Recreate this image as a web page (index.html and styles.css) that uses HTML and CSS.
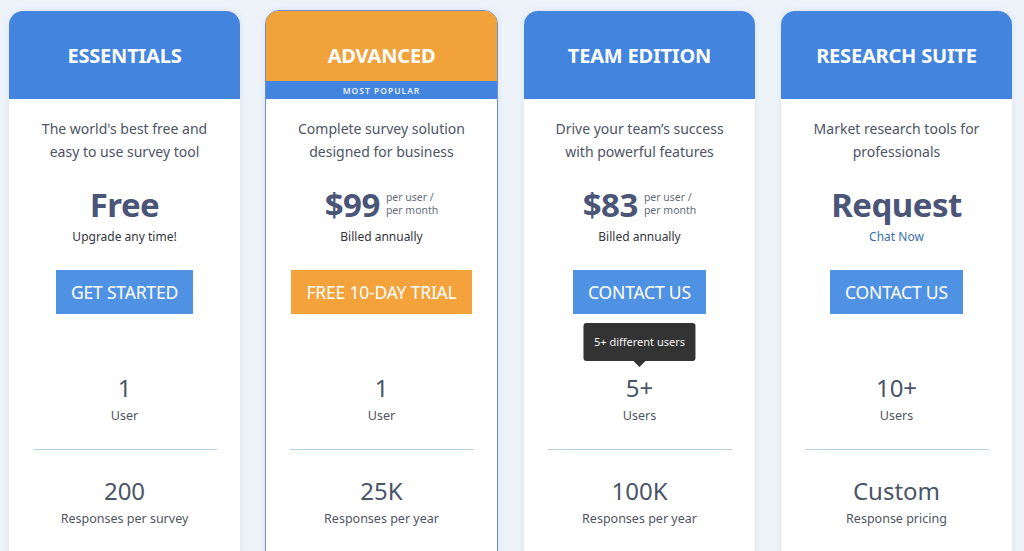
FILE: index.html
```html
<!DOCTYPE html>
<html>
<head>
<meta charset="utf-8">
<link rel="stylesheet" href="styles.css">
</head>
<body>
<div class="plans">
  <div class="card">
    <div class="head blue"><h2>ESSENTIALS</h2></div>
    <div class="body">
      <p class="desc">The world's best free and<br>easy to use survey tool</p>
      <div class="price"><span class="amount">Free</span></div>
      <p class="note">Upgrade any time!</p>
      <a class="btn btn-blue">GET STARTED</a>
      <div class="stat"><span class="num">1</span><span class="label">User</span></div>
      <hr class="divider">
      <div class="stat"><span class="num">200</span><span class="label">Responses per survey</span></div>
    </div>
  </div>
  <div class="card popular">
    <div class="head orange"><h2>ADVANCED</h2></div>
    <div class="band">MOST POPULAR</div>
    <div class="body">
      <p class="desc">Complete survey solution<br>designed for business</p>
      <div class="price"><span class="amount">$99</span><span class="per">per user /<br>per month</span></div>
      <p class="note">Billed annually</p>
      <a class="btn btn-orange">FREE 10-DAY TRIAL</a>
      <div class="stat"><span class="num">1</span><span class="label">User</span></div>
      <hr class="divider">
      <div class="stat"><span class="num">25K</span><span class="label">Responses per year</span></div>
    </div>
  </div>
  <div class="card">
    <div class="head blue"><h2>TEAM EDITION</h2></div>
    <div class="body">
      <p class="desc">Drive your team’s success<br>with powerful features</p>
      <div class="price"><span class="amount">$83</span><span class="per">per user /<br>per month</span></div>
      <p class="note">Billed annually</p>
      <a class="btn btn-blue">CONTACT US</a>
      <div class="stat"><div class="tooltip">5+ different users</div><span class="num">5+</span><span class="label">Users</span></div>
      <hr class="divider">
      <div class="stat"><span class="num">100K</span><span class="label">Responses per year</span></div>
    </div>
  </div>
  <div class="card">
    <div class="head blue"><h2>RESEARCH SUITE</h2></div>
    <div class="body">
      <p class="desc">Market research tools for<br>professionals</p>
      <div class="price"><span class="amount">Request</span></div>
      <p class="note link">Chat Now</p>
      <a class="btn btn-blue">CONTACT US</a>
      <div class="stat"><span class="num">10+</span><span class="label">Users</span></div>
      <hr class="divider">
      <div class="stat"><span class="num">Custom</span><span class="label">Response pricing</span></div>
    </div>
  </div>
</div>
</body>
</html>
```
FILE: styles.css
```css
* { box-sizing: border-box; }
html, body { margin: 0; height: 100%; overflow: hidden; }
body {
  background: #eef3fa;
  font-family: "Noto Sans", "Open Sans", sans-serif;
  color: #4a5160;
}
.plans {
  display: flex;
  gap: 26px;
  padding: 11px 12px 0 9px;
}
.card {
  width: 231px;
  flex: none;
  background: #fff;
  border-radius: 14px 14px 0 0;
  height: 560px;
  box-shadow: 0 0 6px rgba(120, 150, 190, 0.18);
  display: flex;
  flex-direction: column;
}
.card.popular {
  width: 233px;
  border: 1.5px solid #6b8fcb;
  margin-top: -1px;
  margin-left: -1px;
}
.head {
  height: 88px;
  display: flex;
  align-items: center;
  justify-content: center;
  border-radius: 14px 14px 0 0;
}
.popular .head {
  height: 70px;
  padding-top: 18px;
  border-radius: 12px 12px 0 0;
}
.head h2 {
  margin: 0;
  color: #fff;
  font-size: 20px;
  font-weight: 700;
  letter-spacing: -0.2px;
}
.blue { background: #4284de; }
.orange { background: #f1a23a; }
.band {
  height: 18px;
  background: #4284de;
  color: #e8f0fb;
  font-size: 8.5px;
  font-weight: 600;
  letter-spacing: 1px;
  display: flex;
  align-items: center;
  justify-content: center;
}
.body {
  display: flex;
  flex-direction: column;
  align-items: center;
  padding: 18px 22px 0;
  text-align: center;
}
.desc {
  margin: 0;
  font-size: 14px;
  line-height: 23px;
  color: #4d5466;
}
.price {
  margin-top: 22px;
  height: 40px;
  display: flex;
  align-items: center;
  justify-content: center;
  gap: 6px;
}
.amount {
  font-size: 33px;
  font-weight: 700;
  color: #4a5578;
  letter-spacing: -0.5px;
  line-height: 40px;
}
.per {
  font-size: 10.5px;
  line-height: 13px;
  color: #666d7a;
  text-align: left;
  margin-top: -2px;
}
.note {
  margin: 3px 0 0;
  font-size: 12px;
  line-height: 18px;
  color: #33363d;
}
.note.link { color: #3a6fa8; }
.btn {
  margin-top: 24px;
  height: 44px;
  padding: 0 15px;
  display: flex;
  align-items: center;
  justify-content: center;
  color: #fff;
  font-size: 17.5px;
  letter-spacing: -0.2px;
}
.btn-blue { background: #4f92e4; }
.btn-orange { background: #f4a23b; }
.stat {
  margin-top: 59px;
  display: flex;
  flex-direction: column;
  align-items: center;
  position: relative;
}
.stat .num {
  font-size: 24px;
  line-height: 30px;
  color: #4a5568;
}
.stat .label {
  margin-top: 4px;
  font-size: 12.5px;
  line-height: 18px;
  color: #4f5563;
}
.divider {
  width: 184px;
  border: 0;
  border-top: 1px solid #b6d2e6;
  margin: 24px 0 0;
}
.divider + .stat { margin-top: 26px; }
.tooltip {
  position: absolute;
  bottom: 100%;
  margin-bottom: 12px;
  left: 50%;
  transform: translateX(-50%);
  background: #333;
  color: #f2f2f2;
  font-size: 11px;
  line-height: 38px;
  height: 38px;
  padding: 0 10px;
  border-radius: 3px;
  white-space: nowrap;
}
.tooltip::after {
  content: "";
  position: absolute;
  top: 100%;
  left: 50%;
  margin-left: -6px;
  border: 6px solid transparent;
  border-top-color: #333;
  border-bottom: 0;
}
```
